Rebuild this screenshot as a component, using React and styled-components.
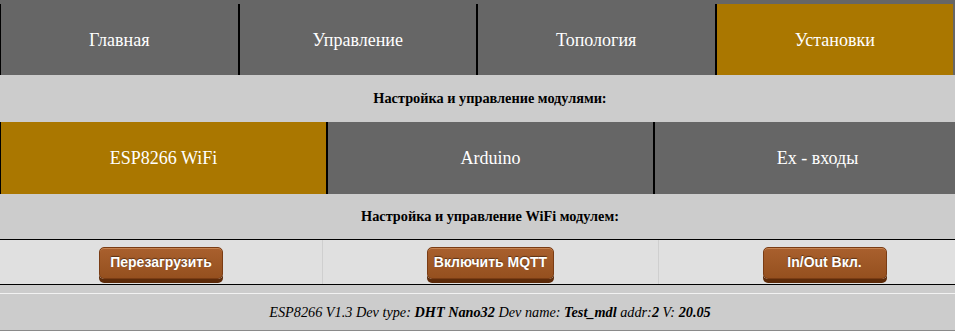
import React from "react";
import styled, { createGlobalStyle } from "styled-components";

const Global = createGlobalStyle`
  html, body { margin: 0; padding: 0; background: #cccccc; overflow: hidden; }
  body { font-family: "Liberation Serif", "Times New Roman", serif; }
`;

const Page = styled.div`
  width: 955px;
  overflow: hidden;
  background: #cccccc;
`;

const TopNav = styled.nav`
  display: flex;
  background: #666666;
  padding: 4px 2px 0 0;
  height: 75px;
  box-sizing: border-box;
`;

const Tab = styled.div`
  flex: 1;
  display: flex;
  align-items: center;
  justify-content: center;
  border-left: ${(p) => (p.$first ? "1px" : "2px")} solid #000;
  background: ${(p) => (p.$active ? "#aa7700" : "#666666")};
  color: #ffffff;
  font-size: 18px;
  padding-top: 1px;
`;

const Content = styled.main`
  width: 980px;
`;

const Heading = styled.div`
  height: ${(p) => p.$h}px;
  display: flex;
  align-items: center;
  justify-content: center;
  font-weight: bold;
  font-size: 14.3px;
  color: #000;
  background: #cccccc;
`;

const ModuleNav = styled.nav`
  display: flex;
  height: 72px;
`;

const ModuleTab = styled(Tab)`
  padding-top: 0;
`;

const ButtonRow = styled.div`
  display: grid;
  grid-template-columns: 322px 336px 1fr;
  height: 44px;
  background: #e0e0e0;
  border-top: 1px solid #000;
  border-bottom: 1px solid #000;
`;

const Cell = styled.div`
  display: flex;
  align-items: flex-start;
  justify-content: center;
  padding-top: 7px;
  padding-left: ${(p) => p.$shift || 0}px;
  border-left: ${(p) => (p.$first ? "none" : "1px solid #cfcfcf")};
`;

const Button = styled.button`
  min-width: 124px;
  height: 32px;
  padding: 0 6px 2px;
  border: 1px solid #7a3c14;
  border-radius: 5px;
  background: linear-gradient(#a9602e, #95501f);
  box-shadow: 0 4px 0 #5d2b0a, inset 0 1px 0 rgba(255, 200, 150, 0.35);
  color: #fff;
  font-family: "Liberation Sans", Arial, sans-serif;
  font-weight: bold;
  font-size: 14px;
  text-shadow: 0 -1px 1px rgba(0, 0, 0, 0.45);
  cursor: pointer;
`;

const Gap = styled.div`
  height: 8px;
  background: #cccccc;
  border-bottom: 1px solid #f2f2f2;
`;

const Footer = styled.footer`
  height: 36px;
  display: flex;
  align-items: center;
  justify-content: center;
  font-style: italic;
  font-size: 14.25px;
  color: #000;
  background: #cccccc;
  border-bottom: 1px solid #8a8a8a;
  b { font-weight: bold; }
`;

export default function App() {
  return (
    <Page>
      <Global />
      <TopNav>
        <Tab $first>Главная</Tab>
        <Tab>Управление</Tab>
        <Tab>Топология</Tab>
        <Tab $active>Установки</Tab>
      </TopNav>
      <Content>
        <Heading $h={47}>Настройка и управление модулями:</Heading>
        <ModuleNav>
          <ModuleTab $first $active>ESP8266 WiFi</ModuleTab>
          <ModuleTab>Arduino</ModuleTab>
          <ModuleTab>Ex - входы</ModuleTab>
        </ModuleNav>
        <Heading $h={45}>Настройка и управление WiFi модулем:</Heading>
        <ButtonRow>
          <Cell $first>
            <Button>Перезагрузить</Button>
          </Cell>
          <Cell>
            <Button>Включить MQTT</Button>
          </Cell>
          <Cell $shift={10}>
            <Button>In/Out Вкл.</Button>
          </Cell>
        </ButtonRow>
        <Gap />
        <Footer>
          <span>
            ESP8266 V1.3 Dev type: <b>DHT Nano32</b> Dev name: <b>Test_mdl</b> addr:<b>2</b> V:{" "}
            <b>20.05</b>
          </span>
        </Footer>
      </Content>
    </Page>
  );
}
